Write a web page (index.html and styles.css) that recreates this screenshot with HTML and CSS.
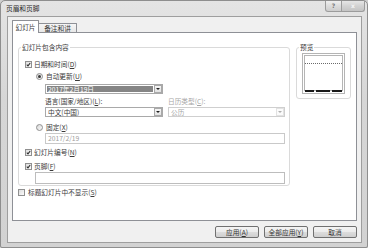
FILE: index.html
```html
<!DOCTYPE html>
<html lang="zh-CN">
<head>
<meta charset="utf-8">
<title>页眉和页脚</title>
<link rel="stylesheet" href="styles.css">
</head>
<body>
<div class="window">
  <div class="titlebar">
    <span class="title">页眉和页脚</span>
    <div class="caption-btns">
      <span class="cap help">?</span>
      <span class="cap close">x</span>
    </div>
  </div>
  <div class="client">
    <div class="tabs">
      <div class="tab active">幻灯片</div>
      <div class="tab">备注和讲义</div>
    </div>
    <div class="panel">
      <div class="panel-top">
        <fieldset class="group main">
          <legend>幻灯片包含内容</legend>
          <div class="row r-date"><span class="cbx checked"><svg viewBox="0 0 5 5"><path d="M0.8 2.6 L2 3.8 L4.2 1"/></svg></span><span class="lbl">日期和时间(<u>D</u>)</span></div>
          <div class="row r-auto indent1"><span class="radio on"></span><span class="lbl">自动更新(<u>U</u>)</span></div>
          <div class="combo hl indent2"><span class="val">2017年2月19日</span><span class="arrow"></span></div>
          <div class="pair indent2">
            <span class="lbl">语言(国家/地区)(<u>L</u>):</span>
            <span class="lbl dis">日历类型(<u>C</u>):</span>
            <div class="combo"><span class="val">中文(中国)</span><span class="arrow"></span></div>
            <div class="combo disabled"><span class="val">公历</span><span class="arrow"></span></div>
          </div>
          <div class="row r-fixed indent1"><span class="radio"></span><span class="lbl">固定(<u>X</u>)</span></div>
          <div class="textbox disabled indent2">2017/2/19</div>
          <div class="row r-num"><span class="cbx checked"><svg viewBox="0 0 5 5"><path d="M0.8 2.6 L2 3.8 L4.2 1"/></svg></span><span class="lbl">幻灯片编号(<u>N</u>)</span></div>
          <div class="row r-foot"><span class="cbx checked"><svg viewBox="0 0 5 5"><path d="M0.8 2.6 L2 3.8 L4.2 1"/></svg></span><span class="lbl">页脚(<u>F</u>)</span></div>
          <div class="textbox footer-tb"></div>
        </fieldset>
        <fieldset class="group preview">
          <legend>预览</legend>
          <svg class="thumb" width="43" height="41" viewBox="0 0 43 41">
            <rect x="0.5" y="0.5" width="42" height="40" fill="#ffffff" stroke="#b4b4b4"/>
            <rect x="2.5" y="2.5" width="38" height="35" fill="none" stroke="#6a6a6a" stroke-dasharray="1 1"/>
            <line x1="3" y1="10.5" x2="40" y2="10.5" stroke="#6a6a6a" stroke-dasharray="1 1"/>
            <rect x="3" y="37" width="9" height="2" fill="#1a1a1a"/>
            <rect x="14" y="37" width="14" height="2" fill="#1a1a1a"/>
            <rect x="30" y="37" width="10" height="2" fill="#1a1a1a"/>
          </svg>
        </fieldset>
      </div>
      <div class="row r-title"><span class="cbx"></span><span class="lbl">标题幻灯片中不显示(<u>S</u>)</span></div>
    </div>
    <div class="buttons">
      <button class="btn">应用(<u>A</u>)</button>
      <button class="btn">全部应用(<u>Y</u>)</button>
      <button class="btn">取消</button>
    </div>
  </div>
</div>
</body>
</html>
```

FILE: styles.css
```css
* { box-sizing: border-box; }
html, body { margin: 0; padding: 0; }
body {
  background: #cfcfcf;
  font-family: "Noto Sans CJK SC", "Liberation Sans", sans-serif;
  font-size: 6.7px;
  color: #3a3a3a;
}
u { text-decoration: underline; text-underline-offset: 1px; }

.window {
  width: 368px;
  height: 248px;
  border: 1px solid #8e8e8e;
  border-radius: 5px 5px 2px 2px;
  background: linear-gradient(to bottom, #e4e4e4, #d6d6d6 40%, #d2d2d2);
  padding: 0 5px 4px 6px;
  display: flex;
  flex-direction: column;
}

.titlebar {
  height: 15px;
  display: flex;
  justify-content: space-between;
  align-items: flex-start;
}
.title {
  line-height: 15px;
  margin-left: -1px;
  color: #2a2a2a;
}
.caption-btns {
  display: flex;
  margin-right: -3px;
}
.cap {
  height: 11px;
  line-height: 10px;
  text-align: center;
  border: 1px solid #9c9c9c;
  border-top: none;
  background: linear-gradient(to bottom, #efefef, #dcdcdc 50%, #cdcdcd);
  color: #7a7a7a;
  font-family: "DejaVu Sans", sans-serif;
  font-size: 6px;
  font-weight: bold;
}
.help { width: 17px; border-radius: 0 0 0 3px; }
.close { width: 24px; margin-left: -1px; border-radius: 0 0 3px 0; background: linear-gradient(to bottom, #e6e6e6, #d2d2d2 50%, #c4c4c4); color: #f4f4f4; }

.client {
  flex: 1;
  border: 1px solid #9e9e9e;
  background: #f0f0f0;
  padding: 3px 4px 0 4px;
  display: flex;
  flex-direction: column;
}

.tabs {
  display: flex;
  align-items: flex-end;
  height: 13px;
  margin-bottom: -1px;
}
.tab {
  height: 10px;
  line-height: 9px;
  padding: 0 2px;
  border: 1px solid #8e9096;
  border-bottom: none;
  background: linear-gradient(to bottom, #f6f6f6, #e6e6e6);
  margin-left: -1px;
  width: 39px;
  text-align: center;
  border-radius: 1px 1px 0 0;
}
.tab.active {
  position: relative;
  z-index: 1;
  height: 13px;
  line-height: 12px;
  width: 27px;
  margin-left: 0;
  background: #ffffff;
}

.panel {
  height: 189px;
  border: 1px solid #8e9096;
  background: #ffffff;
  padding: 10px 5px 0 5px;
}
.panel-top {
  display: flex;
  align-items: flex-start;
  gap: 6px;
}

.group {
  margin: 0;
  border: 1px solid #dadada;
  border-radius: 3px;
  min-inline-size: 0;
}
.group legend {
  line-height: 8px;
  padding: 0 1px;
}
.main {
  width: 272px;
  height: 143px;
  padding: 4px 3px 0 6px;
}
.main legend { margin-left: -4px; }
.preview {
  width: 55px;
  padding: 2px 5px 4px 5px;
}
.preview legend { margin-left: -3px; }
.thumb { display: block; }

.row {
  display: flex;
  align-items: center;
  height: 10px;
  line-height: 10px;
}
.lbl { white-space: nowrap; line-height: 10px; }
.lbl.dis { color: #a6a6a6; }

.cbx {
  width: 7px;
  height: 7px;
  border: 1px solid #8f8f8f;
  background: linear-gradient(135deg, #dcdcdc, #fbfbfb);
  margin-right: 2px;
  display: flex;
  align-items: center;
  justify-content: center;
  flex: none;
}
.cbx svg { width: 5px; height: 5px; display: block; }
.cbx path { fill: none; stroke: #2c2c2c; stroke-width: 1.1; }

.radio {
  width: 7px;
  height: 7px;
  border: 1px solid #8f8f8f;
  border-radius: 50%;
  background: linear-gradient(135deg, #d8d8d8, #fafafa);
  margin-right: 3px;
  flex: none;
  display: flex;
  align-items: center;
  justify-content: center;
}
.radio.on::after {
  content: "";
  width: 3px;
  height: 3px;
  border-radius: 50%;
  background: #3a3a3a;
}

.indent1 { margin-left: 11px; }
.indent2 { margin-left: 20px; }

.r-date { margin-top: 4px; }
.r-auto { margin-top: 2px; }

.combo {
  height: 10px;
  width: 118px;
  border: 1px solid #a9a9a9;
  background: #ffffff;
  display: flex;
  align-items: stretch;
  padding: 1px;
}
.combo .val {
  flex: 1;
  display: flex;
  align-items: center;
  padding-left: 1px;
  white-space: nowrap;
  line-height: 1;
}
.combo .arrow {
  width: 8px;
  margin: -1px -1px -1px 1px;
  border: 1px solid #a9a9a9;
  background: linear-gradient(to bottom, #f6f6f6, #e2e2e2);
  display: flex;
  align-items: center;
  justify-content: center;
}
.combo .arrow::after {
  content: "";
  border-left: 2px solid transparent;
  border-right: 2px solid transparent;
  border-top: 2px solid #1e1e1e;
}
.combo.hl { margin-top: 3px; }
.combo.hl .val { background: #858585; color: #ffffff; }
.combo.disabled { border-color: #cfcfcf; }
.combo.disabled .val { color: #a6a6a6; }
.combo.disabled .arrow { border-color: #e2e2e2; background: #fbfbfb; }
.combo.disabled .arrow::after { border-top-color: #b0b0b0; }

.pair {
  display: grid;
  grid-template-columns: 118px 117px;
  column-gap: 5px;
  row-gap: 1px;
  margin-top: 2px;
}
.pair .combo { width: auto; }

.r-fixed { margin-top: 5px; }
.textbox {
  width: 240px;
  height: 11px;
  border: 1px solid #c9c9c9;
  background: #ffffff;
  line-height: 9px;
  padding-left: 2px;
  margin-top: 1px;
}
.textbox.disabled { color: #9e9e9e; }
.r-num { margin-top: 3px; }
.r-foot { margin-top: 4px; }
.footer-tb {
  margin-left: 10px;
  width: 250px;
  height: 12px;
  border-color: #bdbdbd;
}

.r-title { margin-top: 1px; }
.r-title .cbx { margin-right: 3px; }

.buttons {
  display: flex;
  justify-content: flex-end;
  gap: 5px;
  margin-top: 5px;
}
.btn {
  width: 44px;
  height: 12px;
  padding: 0;
  border: 1px solid #707070;
  border-radius: 2px;
  background: linear-gradient(to bottom, #f4f4f4, #ebebeb 50%, #dddddd 50%, #cfcfcf);
  font-family: inherit;
  font-size: 6.7px;
  line-height: 10px;
  color: #333333;
}
```
